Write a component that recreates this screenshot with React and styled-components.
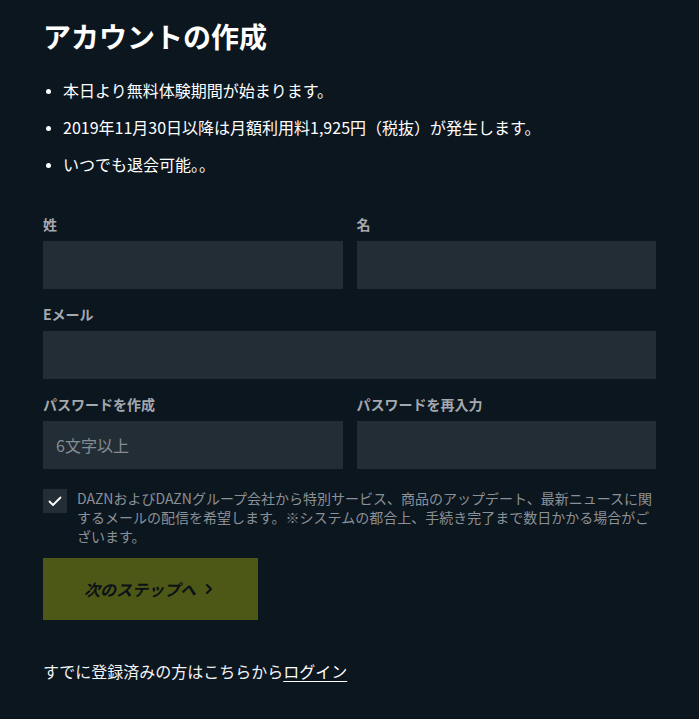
import React from 'react';
import styled, { createGlobalStyle } from 'styled-components';

const GlobalStyle = createGlobalStyle`
  html, body {
    margin: 0;
    padding: 0;
    background: #0c161f;
  }
  body {
    font-family: "Noto Sans CJK JP", "Noto Sans", sans-serif;
    color: #ffffff;
  }
`;

const Page = styled.div`
  width: 699px;
  min-height: 719px;
  box-sizing: border-box;
  padding: 16px 43px 40px;
  background: #0c161f;
`;

const Title = styled.h1`
  margin: 0;
  font-size: 28px;
  font-weight: 700;
  line-height: 40px;
`;

const Notes = styled.ul`
  margin: 23px 0 0;
  padding: 0 0 0 20px;
  list-style: disc;
`;

const Note = styled.li`
  font-size: 16px;
  line-height: 22px;
  margin-bottom: 15px;
  &::marker {
    font-size: 13px;
  }
`;

const Form = styled.div`
  margin-top: 40px;
  display: flex;
  flex-direction: column;
  gap: 16px;
`;

const Row = styled.div`
  display: grid;
  grid-template-columns: ${p => (p.$split ? '1fr 1fr' : '1fr')};
  column-gap: 14px;
`;

const Field = styled.label`
  display: flex;
  flex-direction: column;
  gap: 8px;
`;

const Label = styled.span`
  font-size: 14px;
  font-weight: 700;
  line-height: 18px;
  color: #a3a9ae;
`;

const Input = styled.input`
  height: 48px;
  box-sizing: border-box;
  border: none;
  outline: none;
  background: #232d36;
  color: #fff;
  padding: 0 13px;
  font-family: inherit;
  font-size: 16px;
  &::placeholder {
    color: #858c92;
  }
`;

const Consent = styled.div`
  display: flex;
  gap: 10px;
  margin-top: 20px;
`;

const Box = styled.span`
  flex: 0 0 24px;
  width: 24px;
  height: 24px;
  background: #232d36;
  display: flex;
  align-items: center;
  justify-content: center;
`;

const ConsentText = styled.p`
  margin: 0;
  font-size: 14px;
  line-height: 19px;
  color: #8a9197;
`;

const NextButton = styled.button`
  margin-top: 12px;
  width: 215px;
  height: 62px;
  border: none;
  background: #4d5716;
  color: #0a1118;
  font-family: inherit;
  font-size: 16px;
  font-weight: 700;
  font-style: italic;
  display: flex;
  align-items: center;
  justify-content: center;
  gap: 9px;
  cursor: pointer;
  padding: 0 4px 0 0;
`;

const Footer = styled.p`
  margin: 40px 0 0;
  font-size: 16px;
  line-height: 22px;
  color: #f2f3f4;
`;

const LoginLink = styled.a`
  color: #ffffff;
  text-decoration: underline;
  text-underline-offset: 3px;
`;

export default function App() {
  return (
    <Page>
      <GlobalStyle />
      <Title>アカウントの作成</Title>
      <Notes>
        <Note>本日より無料体験期間が始まります。</Note>
        <Note>2019年11月30日以降は月額利用料1,925円（税抜）が発生します。</Note>
        <Note>いつでも退会可能。。</Note>
      </Notes>
      <Form>
        <Row $split>
          <Field>
            <Label>姓</Label>
            <Input />
          </Field>
          <Field>
            <Label>名</Label>
            <Input />
          </Field>
        </Row>
        <Row>
          <Field>
            <Label>Eメール</Label>
            <Input type="email" />
          </Field>
        </Row>
        <Row $split>
          <Field>
            <Label>パスワードを作成</Label>
            <Input type="password" placeholder="6文字以上" />
          </Field>
          <Field>
            <Label>パスワードを再入力</Label>
            <Input type="password" />
          </Field>
        </Row>
      </Form>
      <Consent>
        <Box>
          <svg width="14" height="11" viewBox="0 0 14 11" fill="none">
            <path d="M1.5 5.5 L5 9 L12.5 1.5" stroke="#fff" strokeWidth="1.8" strokeLinecap="round" strokeLinejoin="round" />
          </svg>
        </Box>
        <ConsentText>
          DAZNおよびDAZNグループ会社から特別サービス、商品のアップデート、最新ニュースに関するメールの配信を希望します。※システムの都合上、手続き完了まで数日かかる場合がございます。
        </ConsentText>
      </Consent>
      <NextButton>
        次のステップへ
        <svg width="8" height="12" viewBox="0 0 8 12" fill="none">
          <path d="M2 2 L6 6 L2 10" stroke="#0a1118" strokeWidth="2" strokeLinecap="round" strokeLinejoin="round" />
        </svg>
      </NextButton>
      <Footer>
        すでに登録済みの方はこちらから<LoginLink href="#">ログイン</LoginLink>
      </Footer>
    </Page>
  );
}
